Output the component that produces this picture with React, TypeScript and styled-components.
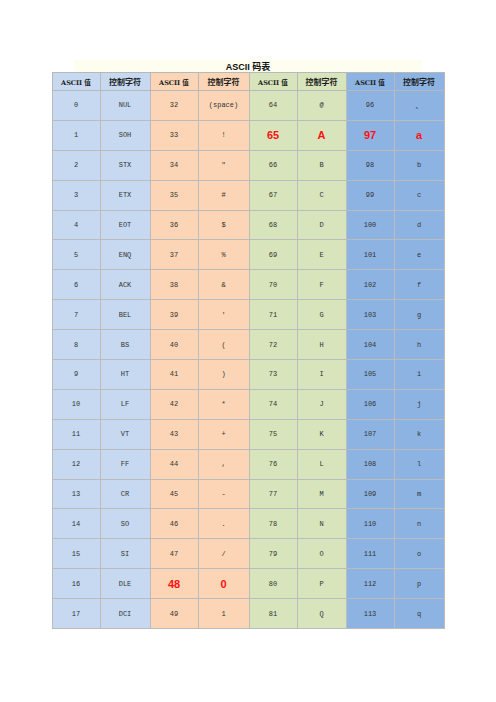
import React from "react";
import styled, { createGlobalStyle } from "styled-components";

const GlobalStyle = createGlobalStyle`
  html, body {
    margin: 0;
    padding: 0;
    background: #ffffff;
  }
`;

const groups = [
  { bg: "#c6d9f0" },
  { bg: "#fbd5b5" },
  { bg: "#d7e4bc" },
  { bg: "#8db3e2" },
];

const ctrl = [
  "NUL", "SOH", "STX", "ETX", "EOT", "ENQ", "ACK", "BEL", "BS",
  "HT", "LF", "VT", "FF", "CR", "SO", "SI", "DLE", "DCI",
];

const charFor = (code: number) => {
  if (code < 32) return ctrl[code];
  if (code === 32) return "(space)";
  if (code === 96) return "、";
  return String.fromCharCode(code);
};

const hot = new Set([65, 97, 48]);

const widths = [48, 50, 48, 51, 48, 49, 48, 50];

const Page = styled.div`
  display: flex;
  flex-direction: column;
  align-items: center;
  padding-top: 60px;
`;

const TitleBar = styled.div`
  width: 348px;
  height: 12px;
  background: #fefef0;
  display: flex;
  align-items: center;
  justify-content: center;
  font-family: "Liberation Sans", "Noto Sans CJK SC", sans-serif;
  font-weight: bold;
  font-size: 9px;
  color: #111;
`;

const Table = styled.table`
  border-collapse: collapse;
  table-layout: fixed;
  border: 1px solid #b4b4b4;
`;

const HeadCell = styled.th<{ $bg: string; $cjk?: boolean }>`
  height: 17px;
  padding: 0;
  background: ${(p) => p.$bg};
  border: 1px solid #b8b8b8;
  font-family: ${(p) =>
    p.$cjk
      ? `"Noto Sans CJK SC", sans-serif`
      : `"DejaVu Serif", "Noto Sans CJK SC", serif`};
  font-weight: bold;
  font-size: ${(p) => (p.$cjk ? "8px" : "6.5px")};
  color: #1a1a1a;
  text-align: center;
  white-space: nowrap;
`;

const Cell = styled.td<{ $bg: string; $hot?: boolean }>`
  height: 28.9px;
  padding: 0;
  background: ${(p) => p.$bg};
  border: 1px solid #bcbcbc;
  text-align: center;
  font-family: ${(p) =>
    p.$hot ? `"Liberation Sans", sans-serif` : `"Liberation Mono", "Noto Sans CJK SC", monospace`};
  font-weight: ${(p) => (p.$hot ? "bold" : "normal")};
  font-size: ${(p) => (p.$hot ? "11px" : "7px")};
  color: ${(p) => (p.$hot ? "#ff1010" : "#333")};
`;

export default function App() {
  const rows = Array.from({ length: 18 }, (_, i) => i);
  return (
    <Page>
      <GlobalStyle />
      <TitleBar>ASCII 码表</TitleBar>
      <Table>
        <colgroup>
          {widths.map((w, i) => (
            <col key={i} style={{ width: w }} />
          ))}
        </colgroup>
        <thead>
          <tr>
            {groups.map((g, gi) => (
              <React.Fragment key={gi}>
                <HeadCell $bg={g.bg}>ASCII 值</HeadCell>
                <HeadCell $bg={g.bg} $cjk>
                  控制字符
                </HeadCell>
              </React.Fragment>
            ))}
          </tr>
        </thead>
        <tbody>
          {rows.map((r) => (
            <tr key={r}>
              {groups.map((g, gi) => {
                const code = gi * 32 + r;
                const isHot = hot.has(code);
                return (
                  <React.Fragment key={gi}>
                    <Cell $bg={g.bg} $hot={isHot}>
                      {code}
                    </Cell>
                    <Cell $bg={g.bg} $hot={isHot}>
                      {charFor(code)}
                    </Cell>
                  </React.Fragment>
                );
              })}
            </tr>
          ))}
        </tbody>
      </Table>
    </Page>
  );
}
